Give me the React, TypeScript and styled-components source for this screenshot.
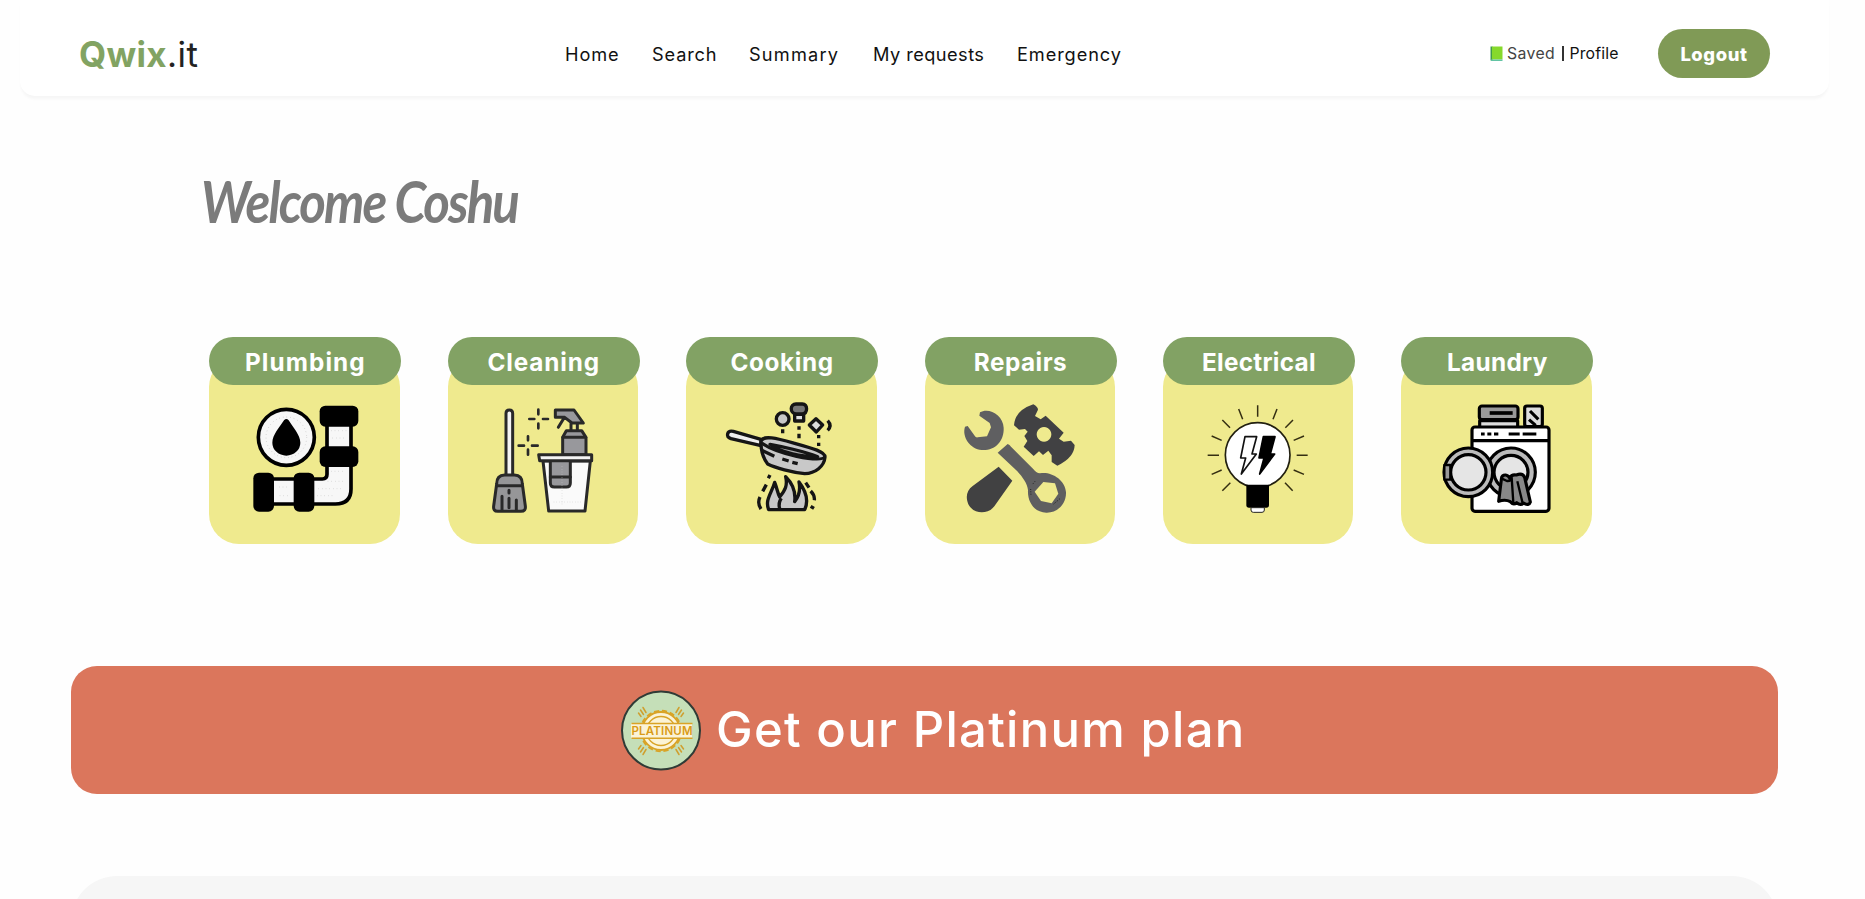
import React from 'react';
import styled, { createGlobalStyle } from 'styled-components';

const Global = createGlobalStyle`
  * { box-sizing: border-box; }
  html, body { margin: 0; height: 899px; overflow: hidden; background: #fefefe; }
  body { font-family: Inter, "Open Sans", sans-serif; color: #111; }
`;

const Page = styled.div`
  height: 899px;
  overflow: hidden;
  display: flex;
  flex-direction: column;
`;

const Header = styled.header`
  display: flex;
  align-items: center;
  flex: none;
  height: 96px;
  margin: 0 36px 0 20px;
  padding: 11px 59px 0;
  background: #fff;
  border-radius: 0 0 15px 15px;
  box-shadow: 0 4px 3px -1px rgba(0, 0, 0, 0.035);
`;

const Logo = styled.div`
  width: 486px;
  font-size: 35px;
  line-height: 48px;
  letter-spacing: 0.5px;
  white-space: nowrap;
  color: #222;
  b { color: #82a362; letter-spacing: 0.3px; }
`;

const Nav = styled.nav`
  display: flex;
  gap: 32px;
  width: 925px;
`;

const Label = styled.a<{ $w: number; $ls?: number }>`
  flex: none;
  width: ${(p) => p.$w}px;
  letter-spacing: ${(p) => p.$ls ?? 0}px;
  white-space: nowrap;
`;

const NavLink = styled(Label)`
  font-size: 18.2px;
  line-height: 26px;
`;

const Account = styled.div`
  display: flex;
  align-items: center;
  width: 168px;
  font-size: 15.8px;
  line-height: 24px;
`;

const Saved = styled(Label)`
  color: #444;
  margin-left: 4px;
`;

const Divider = styled.i`
  width: 1.5px;
  height: 15px;
  margin: 0 6px 0 7px;
  background: #333;
`;

const Logout = styled.button`
  width: 112px;
  height: 49px;
  padding: 0;
  border: 0;
  border-radius: 25px;
  background: #809a56;
  color: #fff;
  font: 800 18.4px Inter, sans-serif;
  letter-spacing: 0.6px;
`;

const Welcome = styled.h1`
  margin: 72px 0 0 201px;
  height: 66px;
  font-family: Lato, sans-serif;
  font-style: italic;
  font-weight: 700;
  font-size: 58px;
  line-height: 66px;
  letter-spacing: -2.2px;
  transform: scaleX(0.878);
  transform-origin: left center;
  color: #7b7b7b;
`;

const Services = styled.section`
  display: grid;
  grid-template-columns: repeat(6, 190.5px);
  column-gap: 47.9px;
  margin: 103px 0 0 209.35px;
`;

const Card = styled.article`
  display: flex;
  flex-direction: column;
`;

const CardTitle = styled.h2<{ $ls: number }>`
  position: relative;
  z-index: 1;
  width: 192px;
  height: 48px;
  margin: 0;
  border-radius: 24px;
  background: #82a264;
  color: #fff;
  font-size: 24.3px;
  font-weight: 700;
  line-height: 51px;
  text-align: center;
  letter-spacing: ${(p) => p.$ls}px;
`;

const CardBody = styled.div`
  display: flex;
  justify-content: center;
  height: 187px;
  margin-top: -28px;
  padding-top: 42px;
  border-radius: 30px;
  background: #efea8e;
`;

const Icon = styled.svg`
  width: 120px;
  height: 120px;
`;

const Banner = styled.section`
  display: flex;
  flex: none;
  align-items: center;
  height: 128px;
  margin: 122px 87px 0 71px;
  padding-left: 550px;
  gap: 15px;
  border-radius: 26px;
  background: #db765c;
  color: #fff;
  font-size: 49px;
  font-weight: 500;
  white-space: nowrap;
`;

const BannerText = styled.span`
  letter-spacing: 1.3px;
  line-height: 60px;
`;

const Panel = styled.section`
  flex: none;
  height: 100px;
  margin: 82px 87px 0 71px;
  border-radius: 46px 46px 0 0;
  background: #f6f6f6;
`;

const Book = () => (
  <svg width="13" height="16" viewBox="0 0 13 16">
    <path d="M.5.5h2v14h-2z" fill="#3f9b4c" />
    <path d="M2 .5h10.5v13H2z" fill="#86d92c" />
    <path d="M1 13.5h11.5V15H1z" fill="#62c4a4" />
  </svg>
);

const Plumbing = () => (
  <Icon viewBox="163 235 360 360">
    <path d="M409 300h72v205q0 45-47 45H230v-75h165q14 0 14-14z" fill="#f7f7f7" stroke="#000" strokeWidth="11" />
    <path d="M421 330h49m-45 22h42m-46 100h43m-53 30h52m-80 22h70m-188-5h33m-31 26h29m72 0h60" stroke="#aaa" strokeWidth="1.5" strokeDasharray="2 9" />
    <rect x="387" y="255" width="116" height="63" rx="17" />
    <rect x="387" y="377" width="116" height="62" rx="17" />
    <rect x="188" y="456" width="62" height="117" rx="17" />
    <rect x="309" y="456" width="62" height="117" rx="17" />
    <circle cx="287" cy="350" r="84" fill="#f7f7f7" stroke="#000" strokeWidth="11" />
    <circle cx="287" cy="350" r="61" fill="none" stroke="#aaa" strokeWidth="2" strokeDasharray="2 9" />
    <path d="M280 299q7-8 14 0c12 20 35 44 35 67a42 39 0 0 1-84 0c0-23 22-47 35-67z" />
  </Icon>
);

const Cleaning = () => (
  <Icon viewBox="160 235 360 360">
    <g stroke="#292929" strokeWidth="9" strokeLinejoin="round" strokeLinecap="round">
      <path d="M229 462V278q0-10 10-10t10 10v184" fill="#f4f4f4" />
      <path d="M201 490q0-27 24-27h29q24 0 24 27l9 66q2 16-13 16h-70q-14 0-12-16z" fill="#969698" />
      <path d="M203 495h75M217 527v40M238 509v8m0 16v28M260 538v29" fill="none" />
      <path d="M377 268h56l28 39h-34l-22-17h-28zM403 292l-17 28" fill="#98989c" />
      <path d="M424 309v18m19-18v18" fill="none" />
      <path d="M399 402v-52l11-20h46l13 20v52z" fill="#98989c" />
      <path d="M400 350h68" fill="none" />
      <path d="M340 421h142l-16 150H357z" fill="#fafafa" />
      <path d="M362 421v66q0 12 12 12h36q12 0 12-12v-66" fill="#98989c" />
      <path d="M362 469h60" fill="none" />
      <path d="M327 402h159v18H330z" fill="#f4f4f4" />
      <path d="M326 267v14m0 28v14m-27-28h15m26 0h15M295 347v12m0 28v15m-28-27h16m24 0h17" fill="none" strokeWidth="8" />
    </g>
    <path d="M372 544h83m-58-107v116" stroke="#ccc" strokeWidth="2" strokeDasharray="2 6" />
  </Icon>
);

const Cooking = () => (
  <Icon viewBox="154 235 360 360">
    <g stroke="#151515" strokeWidth="10" strokeLinejoin="round" fill="#c8c8c8">
      <path d="M274 356l-83-24q-14-3-17 7t10 15l90 21z" fill="#eee" />
      <path d="M274 363c4-22 50-9 101 5 54 15 91 25 91 41-2 28-29 49-61 50-37-4-88-17-111-29q-21-27-20-67z" />
      <path d="M276 367c25 18 65 31 105 40 40 8 75 13 85 2" fill="none" />
      <path d="M301 371c28 5 108 22 143 37-41 2-113-12-143-37z" fill="#aaa" />
      <path d="M276 389l38 18m24 8l19 6m11 4l16 4" fill="none" />
      <circle cx="339" cy="295" r="19" />
      <path d="M375 281h27v20h-27z" fill="#ddd" />
      <path d="M379 250h19c17 0 17 27 0 30h-19c-20-3-18-30 0-30z" fill="#777" />
      <path d="M439 294l20 19-19 21-21-21z" fill="#ddd" />
      <path d="M474 300q14 15 0 29" fill="none" />
      <path d="M297 567c-12-29 9-50 18-82 7 17 8 30 15 44 17-20 24-35 18-61 17 17 31 44 27 75 14-17 17-39 13-59 16 21 31 53 17 83z" />
      <path d="M330 564q-5-17 5-31" fill="none" />
      <path d="M274 565q-12-18-3-36m8-17l11-20m6-19l5-10m107 23l10 15m5 10q13 13 11 28m-11 18l10 6" fill="none" />
      <path d="M339 326v12m49-21v10m0 12v14m59-10v10m0 13v10" fill="none" />
    </g>
  </Icon>
);

const Repairs = () => (
  <Icon viewBox="151 235 360 360">
    <path d="M211 275c26-16 70 8 71 46 2 43-29 70-66 67-34-3-60-39-50-70l8-2 21 29q3 6 9 5l28-3 12-27-4-13-31-22z" fill="#5f5f61" />
    <path d="M294 370q6 2 10 8l66 66q9 12 21 14c31-7 76 18 78 57 1 34-25 62-59 61-36-1-57-31-55-68-2-20-17-39-32-56l-59-56z" fill="#5f5f60" />
    <path d="M401 484l35 4 10 31-20 29-32-7-19-28z" fill="#efea8e" />
    <path d="M267 438l41 42-54 77c-19 25-62 25-78-6-9-22-5-42 13-55z" fill="#414142" />
    <path fillRule="evenodd" d="M371 251q14 8 14 16l-9 19 17 10 15-11 54 51-14 18 14 9 22-3 11 13q-1 38-52 62l-17-11v-20l-10-14-16 13-12-11-16 14-30-28 11-17-9-15 10-13-8-8-18 2-15-13q2-44 58-63zM403 319a22 22 0 1 0 .1 0z" fill="#414143" />
    <path d="M376 482l-9 11m-4 12l1 20m68 25l20-17" stroke="#222" strokeWidth="3" strokeDasharray="3 4" fill="none" />
  </Icon>
);

const Electrical = () => (
  <Icon viewBox="145 235 360 360">
    <circle cx="324" cy="403" r="97" fill="#fff" stroke="#222010" strokeWidth="5" />
    <path d="M324 254v34M267 265l12 31M218 298l23 23M186 346l30 13M174 404h34M186 461l30-13M218 510l24-24M382 265l-12 31M430 298l-23 23M463 346l-31 13M474 404h-33M463 461l-31-13M429 510l-23-24" stroke="#352f12" strokeWidth="4.5" />
    <path d="M290 492h68v61q0 8-8 8h-52q-8 0-8-8z" />
    <path d="M304 561h40v7q0 7-7 7h-26q-7 0-7-7z" fill="#fff" stroke="#222" strokeWidth="3" />
    <path d="M286 348h35l-14 52h13l-45 60 13-48h-15z" fill="#fff" stroke="#111" strokeWidth="5" strokeLinejoin="round" />
    <path d="M341 348h35l-14 52h13l-45 60 13-48h-15z" stroke="#000" strokeWidth="5" strokeLinejoin="round" />
  </Icon>
);

const Laundry = () => (
  <Icon viewBox="154 235 360 360">
    <g stroke="#000" strokeWidth="9.5" strokeLinejoin="round" fill="#ddd">
      <path d="M282 317v-17h114v17" />
      <rect x="281" y="256" width="116" height="41" rx="8" fill="#999" />
      <path d="M312 277h69" strokeWidth="11" />
      <rect x="417" y="256" width="53" height="62" rx="7" />
      <path d="M433 271l25 25m-28 1l20 17" fill="none" />
      <rect x="259" y="319" width="231" height="253" rx="9" fill="#fff" />
      <path d="M260 360h230" />
      <path d="M286 340h11m8 0h12m8 0h13m31 0h33m9 0h41" />
      <circle cx="376" cy="455" r="73" fill="#bbb" />
      <circle cx="376" cy="455" r="51" fill="#e5e5e5" />
      <path d="M339 542l8-66q1-14 13-13 8 1 12 9 6-12 20-9 19-7 25 7l17 74q-4 13-20 3-10 9-21-1-10 8-19-3-15-8-35-1z" fill="#888" />
      <path d="M347 473l17 8q12 1 14-10l5 75m12-64l16 66" fill="none" strokeWidth="7" />
      <circle cx="248" cy="455" r="73" fill="#bbb" />
      <circle cx="248" cy="455" r="53" fill="#e5e5e5" />
      <path d="M176 433h18v44h-18z" fill="#999" strokeWidth="7" />
    </g>
  </Icon>
);

const Badge = () => (
  <svg width="80" height="81" viewBox="0 0 80 81">
    <circle cx="40" cy="40.5" r="39" fill="#c5dfb8" stroke="#303b36" strokeWidth="2" />
    <circle cx="40" cy="41" r="19" fill="#fbf3d6" stroke="#d9a326" strokeWidth="1.8" />
    <circle cx="40" cy="41" r="20.3" fill="none" stroke="#d9a326" strokeWidth="1.8" strokeDasharray="5.2 2.8" />
    <circle cx="40" cy="41" r="14.5" fill="none" stroke="#d9a326" strokeWidth="1.4" />
    <path d="M10 33.5h61v14.8H10z" fill="#fbf3d6" />
    <path d="M10.5 33.5h61M10.5 48.3h61" stroke="#d9a326" strokeWidth="1.5" />
    <path d="M17.5 23l2.5 3.5m-.5-6.500l3 4.500m-.5-7l3 5M62.500 23l-2.500 3.500m.5-6.500l-3 4.500m.5-7l-3 5M17.500 59l2.500-3.500m-.5 6.500l3-4.500m-.5 7l3-5M62.500 59l-2.500-3.500m.5 6.500l-3-4.500m.5 7l-3-5" stroke="#cf9f2e" strokeWidth="1.5" strokeLinecap="round" />
    <text x="10.5" y="45.300" textLength="61" lengthAdjust="spacing" fontFamily="Inter, sans-serif" fontSize="11.500" fontWeight="600" fill="#d99b16">PLATINUM</text>
  </svg>
);

const navItems: [string, number, number][] = [
  ['Home', 55, 0.9],
  ['Search', 65, 0.85],
  ['Summary', 92, 1.2],
  ['My requests', 112, 0.45],
  ['Emergency', 107, 0.9],
];

const services: [string, number, React.FC][] = [
  ['Plumbing', 1.1, Plumbing],
  ['Cleaning', 0.85, Cleaning],
  ['Cooking', 0.65, Cooking],
  ['Repairs', 0.5, Repairs],
  ['Electrical', 0.3, Electrical],
  ['Laundry', 0.35, Laundry],
];

export default function App() {
  return (
    <Page>
      <Global />
      <Header>
        <Logo><b>Qwix</b>.it</Logo>
        <Nav>
          {navItems.map(([name, w, ls]) => <NavLink key={name} $w={w} $ls={ls}>{name}</NavLink>)}
        </Nav>
        <Account>
          <Book />
          <Saved $w={48} $ls={0.35}>Saved</Saved>
          <Divider />
          <Label $w={50} $ls={0.15}>Profile</Label>
        </Account>
        <Logout>Logout</Logout>
      </Header>
      <Welcome>Welcome Coshu</Welcome>
      <Services>
        {services.map(([name, ls, Picture]) => (
          <Card key={name}>
            <CardTitle $ls={ls}>{name}</CardTitle>
            <CardBody><Picture /></CardBody>
          </Card>
        ))}
      </Services>
      <Banner>
        <Badge />
        <BannerText>Get our Platinum plan</BannerText>
      </Banner>
      <Panel />
    </Page>
  );
}
